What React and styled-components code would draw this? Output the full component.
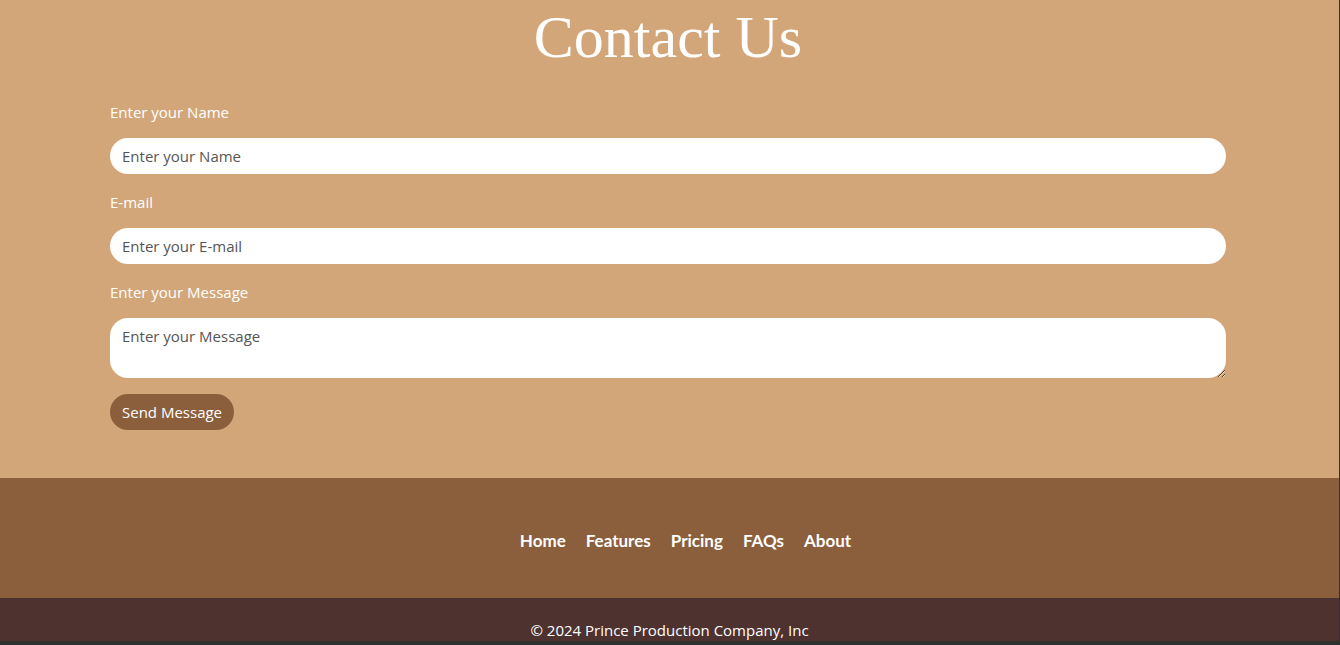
import React from 'react';
import styled, { createGlobalStyle } from 'styled-components';

const GlobalStyle = createGlobalStyle`
    html, body {
        margin: 0;
        padding: 0;
        background: #2f3131;
    }
    * {
        box-sizing: border-box;
    }
`;

const Window = styled.div`
    height: 641px;
    overflow: hidden;
    border-right: 1px solid #2f3131;
    background: #d3a679;
`;

const ContactSection = styled.section`
    background: #d3a679;
    padding: 3px 113px 48px 110px;
`;

const Title = styled.h1`
    margin: 0 0 30px;
    text-align: center;
    font-family: 'Liberation Serif', 'Times New Roman', serif;
    font-weight: 400;
    font-size: 60px;
    color: #ffffff;
`;

const Form = styled.form`
    display: flex;
    flex-direction: column;
    align-items: flex-start;
`;

const Label = styled.label`
    font-family: 'Open Sans', 'Noto Sans', sans-serif;
    font-size: 15px;
    line-height: 20px;
    color: #ffffff;
    margin-bottom: 16px;
`;

const Input = styled.input`
    width: 100%;
    height: 36px;
    border: none;
    border-radius: 18px;
    padding: 0 12px;
    margin-bottom: 18px;
    font-family: 'Open Sans', 'Noto Sans', sans-serif;
    font-size: 15px;
    color: #333333;
    background: #ffffff;
    outline: none;

    &::placeholder {
        color: #555555;
    }
`;

const TextArea = styled.textarea`
    width: 100%;
    height: 60px;
    border: none;
    border-radius: 18px;
    padding: 8px 12px;
    margin-bottom: 16px;
    font-family: 'Open Sans', 'Noto Sans', sans-serif;
    font-size: 15px;
    line-height: 20px;
    color: #333333;
    background: #ffffff;
    outline: none;
    resize: vertical;

    &::placeholder {
        color: #555555;
    }
`;

const SendButton = styled.button`
    height: 36px;
    padding: 0 12px;
    border: none;
    border-radius: 18px;
    background: #8b5e3c;
    color: #ffffff;
    font-family: 'Open Sans', 'Noto Sans', sans-serif;
    font-size: 15px;
    cursor: pointer;
`;

const NavBar = styled.nav`
    background: #8b5e3c;
    height: 120px;
    padding-top: 4px;
    display: flex;
    align-items: center;
    justify-content: center;
`;

const NavList = styled.ul`
    display: flex;
    gap: 20px;
    list-style: none;
    margin: 0;
    padding: 0 0 0 32px;
`;

const NavLink = styled.a`
    font-family: 'Comic Sans MS', 'Lato', 'DejaVu Sans', sans-serif;
    font-weight: 700;
    font-size: 17px;
    color: #ffffff;
    text-decoration: none;
`;

const Footer = styled.footer`
    background: #4d3230;
    padding: 22px 0;
    text-align: center;
`;

const FooterText = styled.p`
    margin: 0;
    font-family: 'Open Sans', 'Noto Sans', sans-serif;
    font-size: 15px;
    line-height: 20px;
    color: #ffffff;
`;

const navItems = ['Home', 'Features', 'Pricing', 'FAQs', 'About'];

const App = () => {
    return (
        <>
            <GlobalStyle />
            <Window>
                <ContactSection>
                    <Title>Contact Us</Title>
                    <Form onSubmit={(e) => e.preventDefault()}>
                        <Label htmlFor="name">Enter your Name</Label>
                        <Input id="name" type="text" placeholder="Enter your Name" />
                        <Label htmlFor="email">E-mail</Label>
                        <Input id="email" type="email" placeholder="Enter your E-mail" />
                        <Label htmlFor="message">Enter your Message</Label>
                        <TextArea id="message" placeholder="Enter your Message" />
                        <SendButton type="submit">Send Message</SendButton>
                    </Form>
                </ContactSection>
                <NavBar>
                    <NavList>
                        {navItems.map((item) => (
                            <li key={item}>
                                <NavLink href="#">{item}</NavLink>
                            </li>
                        ))}
                    </NavList>
                </NavBar>
                <Footer>
                    <FooterText>© 2024 Prince Production Company, Inc</FooterText>
                </Footer>
            </Window>
        </>
    );
};

export default App;
